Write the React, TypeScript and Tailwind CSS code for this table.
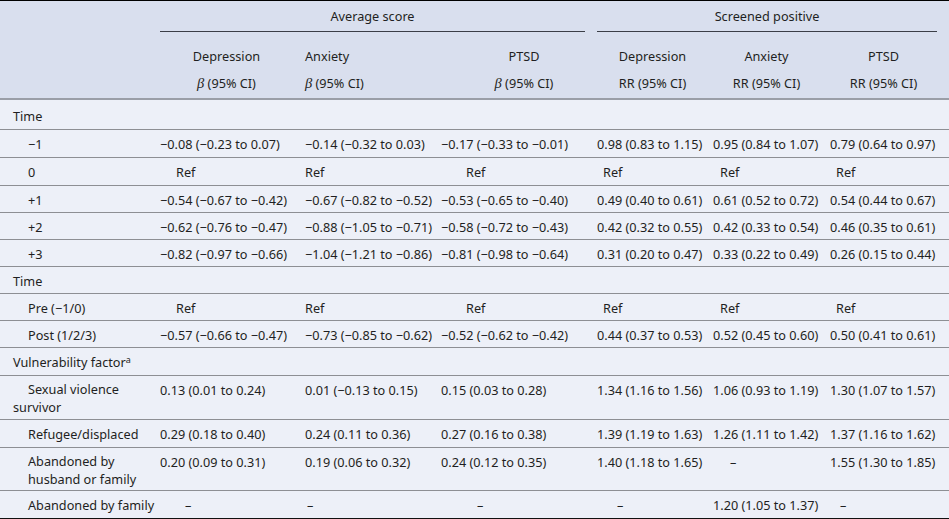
import type { ReactNode } from "react";

const cols = "grid grid-cols-[160px_145px_136px_156px_116px_117px_119px]";

// per-column nudges for the "Ref" and dash cells, as in the source table
const refPad = ["pl-[16px]", "pl-0", "pl-[25px]", "pl-[6px]", "pl-[7px]", "pl-[6px]"];
const dashPad = ["pl-[25px]", "pl-[2px]", "pl-[36px]", "pl-[20px]", "pl-[17px]", "pl-[10px]"];

const subHead = [
  "pr-[12px] text-center",
  "text-left",
  "pl-[10px] text-center",
  "pr-[5px] text-center",
  "pr-[10px] text-center",
  "pr-[12px] text-center",
];

type RowData = {
  label: ReactNode;
  labelClass?: string;
  h: string;
  pt?: string;
  values?: string[];
  last?: boolean;
};

const Beta = () => (
  <span className="italic font-['Liberation_Serif',serif] text-[14.5px]">β</span>
);

const rows: RowData[] = [
  { label: "Time", h: "h-[30px]", pt: "pt-[8px]" },
  {
    label: "−1",
    labelClass: "pl-[28px]",
    h: "h-[28px]",
    values: [
      "−0.08 (−0.23 to 0.07)",
      "−0.14 (−0.32 to 0.03)",
      "−0.17 (−0.33 to −0.01)",
      "0.98 (0.83 to 1.15)",
      "0.95 (0.84 to 1.07)",
      "0.79 (0.64 to 0.97)",
    ],
  },
  {
    label: "0",
    labelClass: "pl-[28px]",
    h: "h-[28px]",
    values: ["Ref", "Ref", "Ref", "Ref", "Ref", "Ref"],
  },
  {
    label: "+1",
    labelClass: "pl-[28px]",
    h: "h-[27px]",
    values: [
      "−0.54 (−0.67 to −0.42)",
      "−0.67 (−0.82 to −0.52)",
      "−0.53 (−0.65 to −0.40)",
      "0.49 (0.40 to 0.61)",
      "0.61 (0.52 to 0.72)",
      "0.54 (0.44 to 0.67)",
    ],
  },
  {
    label: "+2",
    labelClass: "pl-[28px]",
    h: "h-[27px]",
    values: [
      "−0.62 (−0.76 to −0.47)",
      "−0.88 (−1.05 to −0.71)",
      "−0.58 (−0.72 to −0.43)",
      "0.42 (0.32 to 0.55)",
      "0.42 (0.33 to 0.54)",
      "0.46 (0.35 to 0.61)",
    ],
  },
  {
    label: "+3",
    labelClass: "pl-[28px]",
    h: "h-[27px]",
    values: [
      "−0.82 (−0.97 to −0.66)",
      "−1.04 (−1.21 to −0.86)",
      "−0.81 (−0.98 to −0.64)",
      "0.31 (0.20 to 0.47)",
      "0.33 (0.22 to 0.49)",
      "0.26 (0.15 to 0.44)",
    ],
  },
  { label: "Time", h: "h-[27px]" },
  {
    label: "Pre (−1/0)",
    labelClass: "pl-[28px]",
    h: "h-[27px]",
    values: ["Ref", "Ref", "Ref", "Ref", "Ref", "Ref"],
  },
  {
    label: "Post (1/2/3)",
    labelClass: "pl-[28px]",
    h: "h-[27px]",
    values: [
      "−0.57 (−0.66 to −0.47)",
      "−0.73 (−0.85 to −0.62)",
      "−0.52 (−0.62 to −0.42)",
      "0.44 (0.37 to 0.53)",
      "0.52 (0.45 to 0.60)",
      "0.50 (0.41 to 0.61)",
    ],
  },
  {
    label: (
      <>
        Vulnerability factor<sup className="text-[9px]">a</sup>
      </>
    ),
    h: "h-[28px]",
  },
  {
    label: (
      <>
        Sexual violence
        <br />
        survivor
      </>
    ),
    labelClass: "pl-[13px] indent-[15px] leading-[17.5px] -mt-[1px]",
    h: "h-[44px]",
    values: [
      "0.13 (0.01 to 0.24)",
      "0.01 (−0.13 to 0.15)",
      "0.15 (0.03 to 0.28)",
      "1.34 (1.16 to 1.56)",
      "1.06 (0.93 to 1.19)",
      "1.30 (1.07 to 1.57)",
    ],
  },
  {
    label: "Refugee/displaced",
    labelClass: "pl-[28px]",
    h: "h-[28px]",
    values: [
      "0.29 (0.18 to 0.40)",
      "0.24 (0.11 to 0.36)",
      "0.27 (0.16 to 0.38)",
      "1.39 (1.19 to 1.63)",
      "1.26 (1.11 to 1.42)",
      "1.37 (1.16 to 1.62)",
    ],
  },
  {
    label: (
      <>
        Abandoned by
        <br />
        husband or family
      </>
    ),
    labelClass: "pl-[28px] leading-[17.5px] -mt-[1px]",
    h: "h-[43px]",
    values: [
      "0.20 (0.09 to 0.31)",
      "0.19 (0.06 to 0.32)",
      "0.24 (0.12 to 0.35)",
      "1.40 (1.18 to 1.65)",
      "–",
      "1.55 (1.30 to 1.85)",
    ],
  },
  {
    label: "Abandoned by family",
    labelClass: "pl-[28px]",
    h: "h-[28px]",
    values: ["–", "–", "–", "–", "1.20 (1.05 to 1.37)", "–"],
    last: true,
  },
];

const Cell = ({ value, col }: { value: string; col: number }) => {
  if (value === "Ref") return <div className={refPad[col]}>Ref</div>;
  if (value === "–") return <div className={dashPad[col]}>–</div>;
  return <div className="whitespace-nowrap">{value}</div>;
};

const BodyRow = ({ row }: { row: RowData }) => (
  <div
    className={`${cols} ${row.h} ${row.pt ?? "pt-[6px]"} border-b ${
      row.last ? "border-[#111111]" : "border-[#8d8f94]"
    }`}
  >
    <div className={`pr-[4px] whitespace-nowrap ${row.labelClass ?? "pl-[13px]"}`}>{row.label}</div>
    {row.values?.map((v, i) => <Cell key={i} value={v} col={i} />)}
  </div>
);

export default function App() {
  const sub = [
    ["Depression", "beta"],
    ["Anxiety", "beta"],
    ["PTSD", "beta"],
    ["Depression", "RR (95% CI)"],
    ["Anxiety", "RR (95% CI)"],
    ["PTSD", "RR (95% CI)"],
  ];
  return (
    <div className="w-[949px] h-[519px] overflow-hidden bg-[#edf0f8] text-[#1f1f22] text-[12.7px] leading-[16px] font-['Noto_Sans',sans-serif]">
      <div className="h-[100px] border-t border-t-black border-b-2 border-b-[#9a9ea7] bg-[#d9dfee]">
        <div className={cols}>
          <div />
          <div className="col-span-3 mr-[12px] pt-[7px] pb-[7px] border-b border-[#3b3e47] text-center">
            Average score
          </div>
          <div className="col-span-3 mr-[12px] pt-[7px] pb-[7px] border-b border-[#3b3e47] text-center">
            Screened positive
          </div>
        </div>
        <div className={cols}>
          <div />
          {sub.map(([name, stat], i) => (
            <div key={i} className={`pt-[16px] ${subHead[i]}`}>
              <div>{name}</div>
              <div className="mt-[11px]">
                {stat === "beta" ? (
                  <>
                    <Beta /> (95% CI)
                  </>
                ) : (
                  stat
                )}
              </div>
            </div>
          ))}
        </div>
      </div>
      {rows.map((r, i) => (
        <BodyRow key={i} row={r} />
      ))}
    </div>
  );
}
